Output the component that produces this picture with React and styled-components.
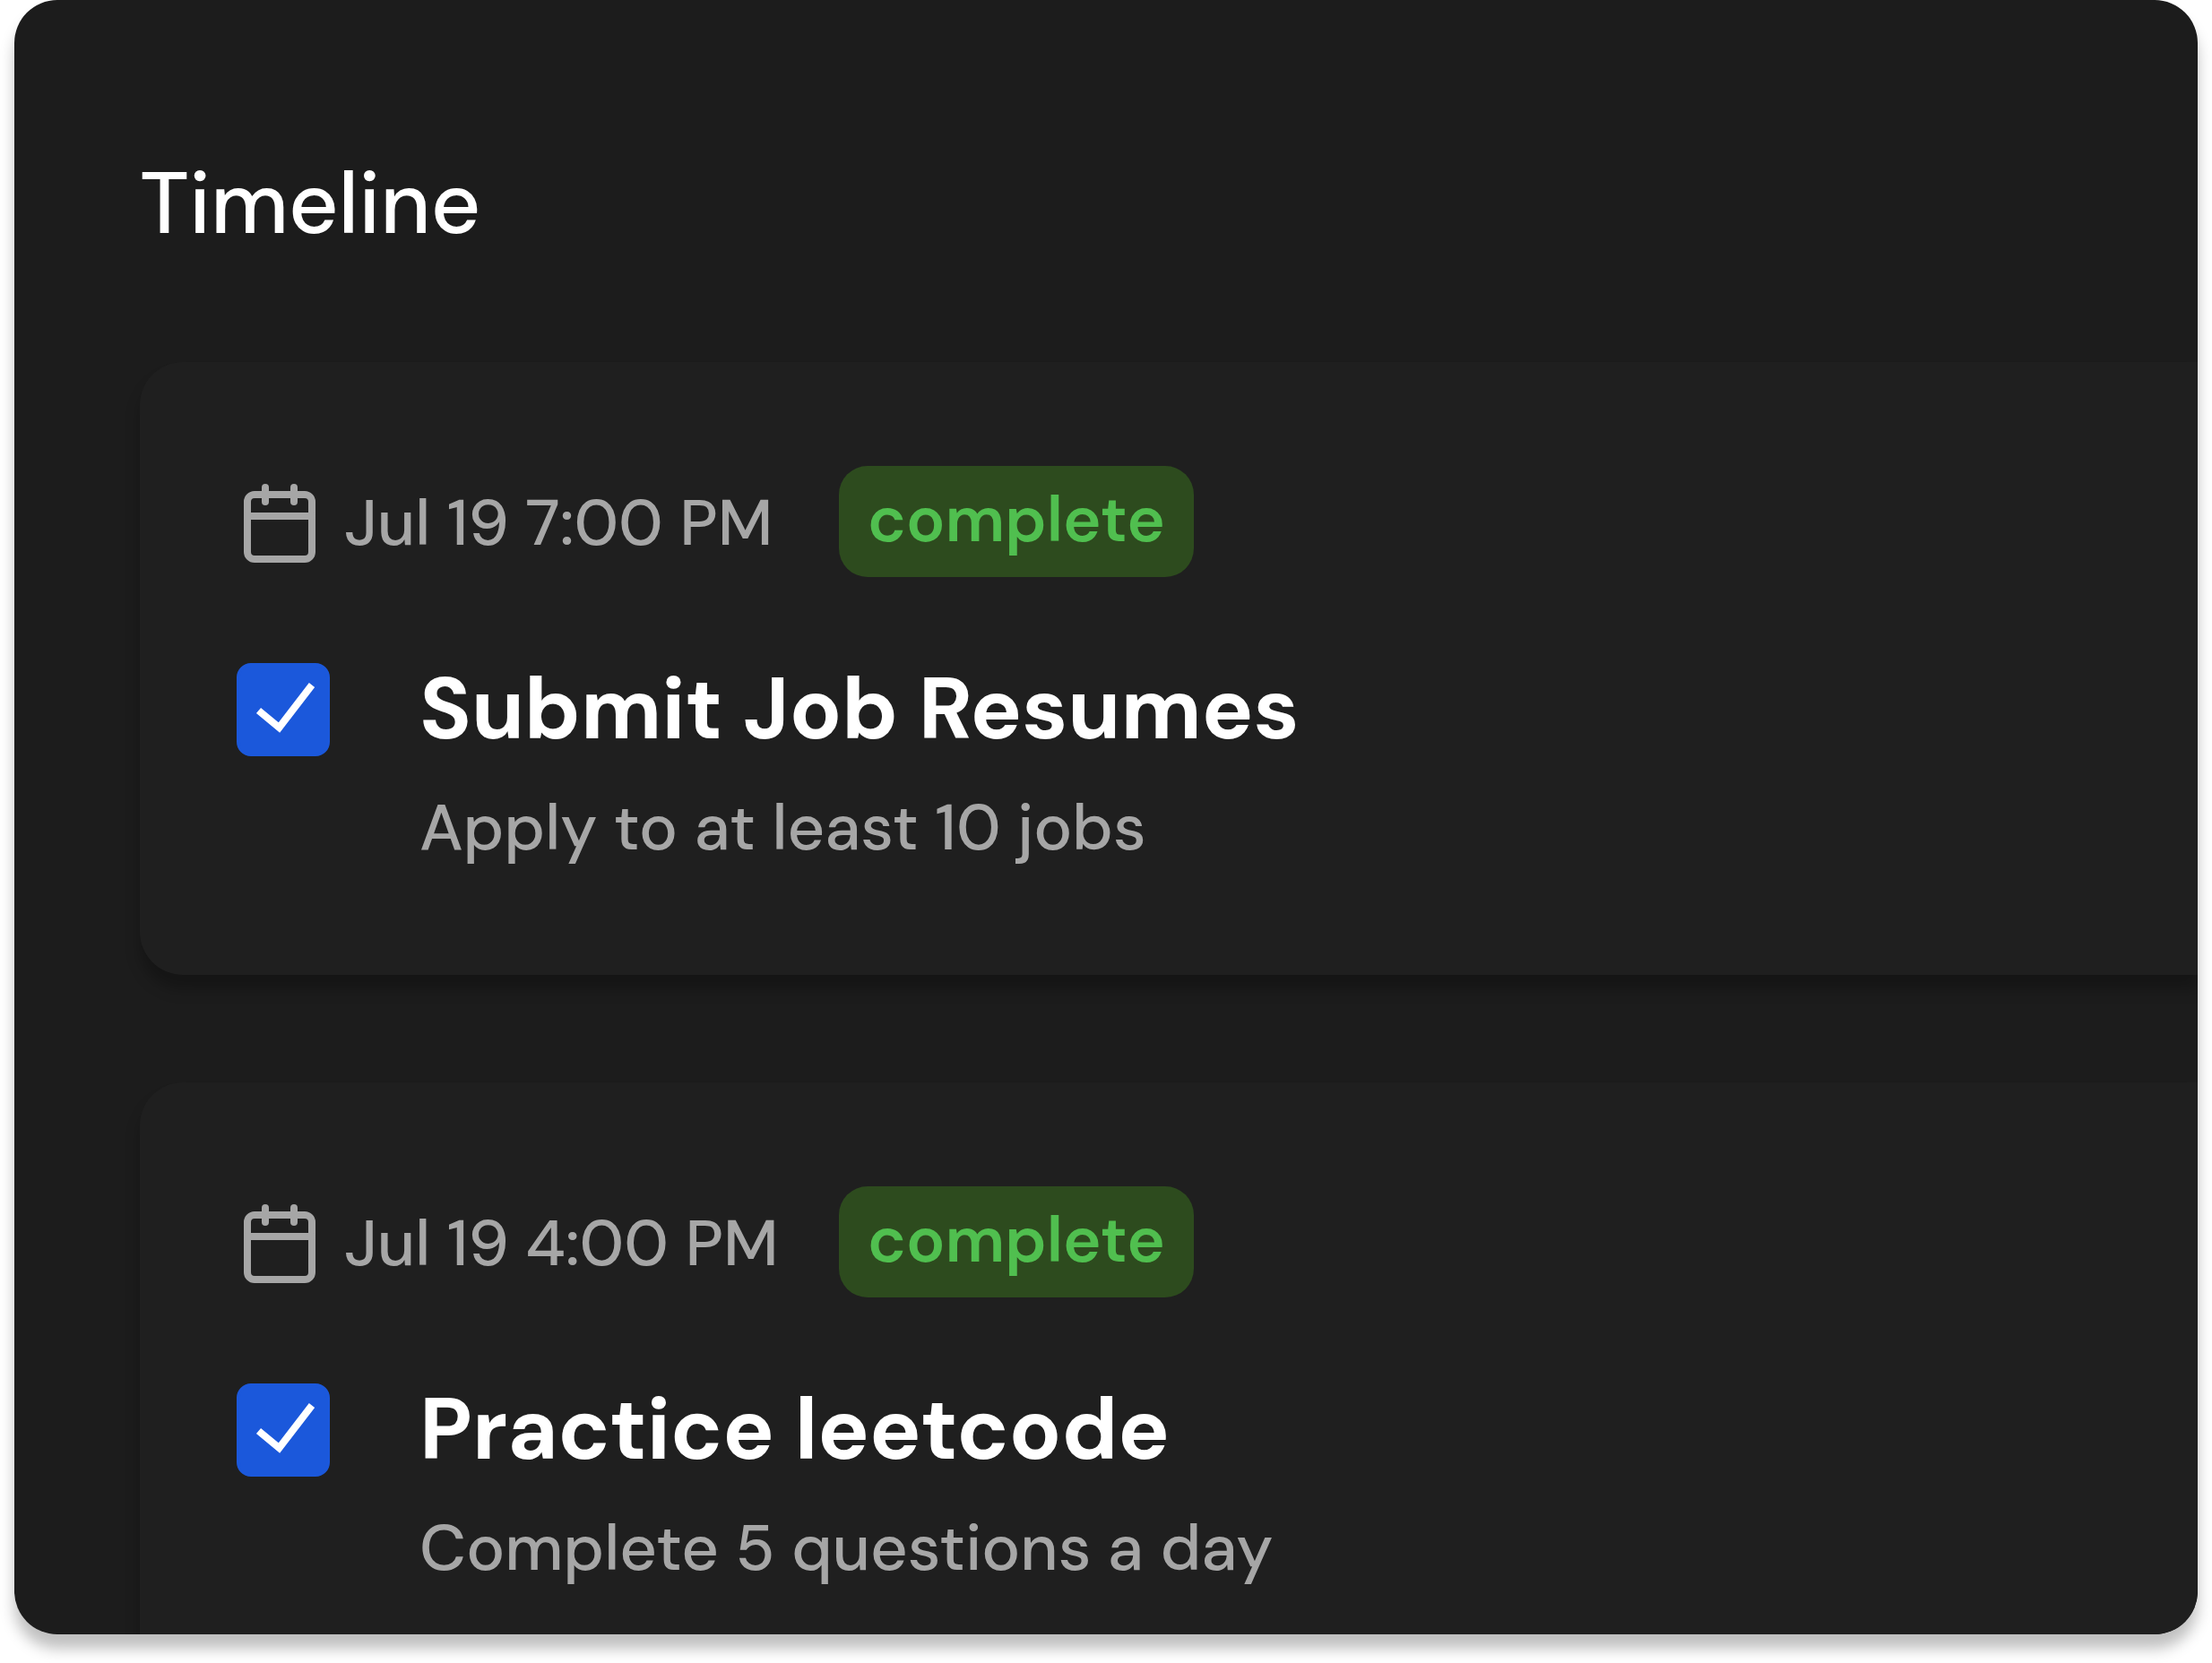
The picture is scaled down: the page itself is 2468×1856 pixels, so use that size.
import React, { useId, useState } from "react";
import styled, { createGlobalStyle } from "styled-components";
import { Calendar } from "lucide-react";

const GlobalStyle = createGlobalStyle`
  * {
    box-sizing: border-box;
  }
  body {
    margin: 0;
    background: #ffffff;
    font-family: "DM Sans", Inter, sans-serif;
  }
`;

const Panel = styled.main`
  display: flex;
  flex-direction: column;
  gap: 112px;
  height: calc(100vh - 32px);
  margin: 0 16px 32px;
  padding: 164px 0 0 140px;
  overflow: hidden;
  border-radius: 48px;
  background: #1c1c1c;
  box-shadow: 0 16px 16px rgba(0, 0, 0, 0.25);
`;

const Heading = styled.h1`
  margin: 0;
  color: #ffffff;
  font-size: 96px;
  font-weight: 500;
  line-height: 128px;
`;

const TaskList = styled.ul`
  display: flex;
  flex-direction: column;
  gap: 120px;
  margin: 0;
  padding: 0;
  list-style: none;
`;

const Card = styled.li`
  display: flex;
  flex-direction: column;
  gap: 84px;
  padding: 116px 0 116px 108px;
  border-radius: 48px 0 0 48px;
  background: #1f1f1f;
  box-shadow: 0 16px 16px rgba(0, 0, 0, 0.25);
`;

const MetaRow = styled.div`
  display: grid;
  grid-template-columns: 672px auto;
  justify-content: start;
  align-items: end;
`;

const DateGroup = styled.div`
  display: flex;
  align-items: center;
  gap: 24px;
  padding-bottom: 12px;
  color: #a6a6a6;
`;

const DateText = styled.time`
  font-size: 72px;
  font-weight: 500;
  line-height: 96px;
`;

const Badge = styled.span`
  padding: 12px 32px 16px;
  border-radius: 32px;
  background: #2d4b1e;
  color: #50bf4f;
  font-size: 72px;
  font-weight: 600;
  line-height: 96px;
`;

const TaskRow = styled.div`
  display: flex;
  align-items: flex-start;
  gap: 100px;
`;

const CheckWrap = styled.span`
  display: grid;
  padding-top: 12px;
  > * {
    grid-area: 1 / 1;
  }
`;

const Checkbox = styled.input`
  appearance: none;
  width: 104px;
  height: 104px;
  margin: 0;
  border: 4px solid #1b58db;
  border-radius: 16px;
  cursor: pointer;
  &:checked {
    background: #1b58db;
  }
`;

const CheckMark = styled.svg`
  width: 104px;
  height: 104px;
  pointer-events: none;
`;

const TaskText = styled.div`
  display: flex;
  flex-direction: column;
  gap: 20px;
`;

const TaskTitle = styled.label`
  color: #ffffff;
  font-size: 96px;
  font-weight: 700;
  line-height: 128px;
`;

const TaskNote = styled.p`
  margin: 0;
  color: #a6a6a6;
  font-size: 72px;
  font-weight: 500;
  line-height: 96px;
`;

const TASKS = [
  {
    date: "Jul 19 7:00 PM",
    title: "Submit Job Resumes",
    note: "Apply to at least 10 jobs",
  },
  {
    date: "Jul 19 4:00 PM",
    title: "Practice leetcode",
    note: "Complete 5 questions a day",
  },
];

function TaskCard({ date, title, note }) {
  const id = useId();
  const [done, setDone] = useState(true);
  return (
    <Card>
      <MetaRow>
        <DateGroup>
          <Calendar size={96} strokeWidth={2} aria-hidden="true" />
          <DateText>{date}</DateText>
        </DateGroup>
        <Badge>complete</Badge>
      </MetaRow>
      <TaskRow>
        <CheckWrap>
          <Checkbox
            id={id}
            type="checkbox"
            checked={done}
            onChange={(e) => setDone(e.target.checked)}
          />
          {done && (
            <CheckMark viewBox="0 0 104 104" fill="none" aria-hidden="true">
              <path d="M24.5 53 47.5 72 84 24.5" stroke="#ffffff" strokeWidth="8" />
            </CheckMark>
          )}
        </CheckWrap>
        <TaskText>
          <TaskTitle htmlFor={id}>{title}</TaskTitle>
          <TaskNote>{note}</TaskNote>
        </TaskText>
      </TaskRow>
    </Card>
  );
}

export default function App() {
  return (
    <>
      <GlobalStyle />
      <Panel>
        <Heading>Timeline</Heading>
        <TaskList>
          {TASKS.map((task) => (
            <TaskCard key={task.title} {...task} />
          ))}
        </TaskList>
      </Panel>
    </>
  );
}
